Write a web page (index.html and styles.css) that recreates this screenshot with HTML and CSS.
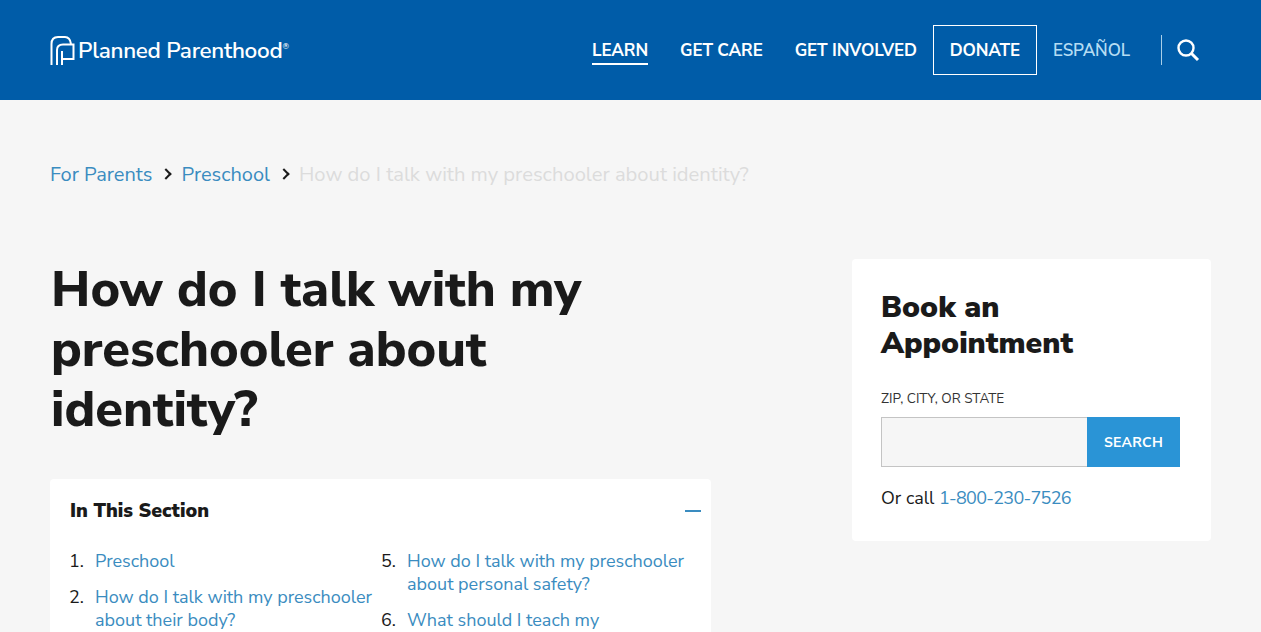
FILE: index.html
```html
<!DOCTYPE html>
<html lang="en">
<head>
    <meta charset="UTF-8">
    <meta name="viewport" content="width=device-width, initial-scale=1.0">
    <title>How do I talk with my preschooler about identity?</title>
    <link rel="stylesheet" href="styles.css">
</head>
<body>
    <header class="site-header">
        <a class="logo" href="#">
            <svg class="logo-mark" width="25" height="31" viewBox="4 4 25 31" fill="none" stroke="#fff" stroke-width="2">
                <path d="M5.500 34V13Q5.500 6 12 6H19Q24 6 25 13"/>
                <path d="M11 34V19Q11 13.500 17 13.500H27.500V28H16"/>
                <path d="M16 34V20"/>
            </svg>
            <span class="logo-text">Planned Parenthood<sup>®</sup></span>
        </a>
        <nav class="main-nav">
            <a class="nav-link active" href="#">LEARN</a>
            <a class="nav-link" href="#">GET CARE</a>
            <a class="nav-link" href="#">GET INVOLVED</a>
            <a class="nav-donate" href="#">DONATE</a>
            <a class="nav-link lang" href="#">ESPAÑOL</a>
            <span class="nav-divider"></span>
            <button class="nav-search" aria-label="Search">
                <svg width="24" height="24" viewBox="0 0 24 24" fill="none" stroke="#fff">
                    <circle cx="10" cy="10" r="7.500" stroke-width="2.400"/>
                    <path d="M15.500 15.500L22 22" stroke-width="3"/>
                </svg>
            </button>
        </nav>
    </header>

    <ol class="breadcrumb">
        <li><a href="#">For Parents</a></li>
        <li><a href="#">Preschool</a></li>
        <li class="current">How do I talk with my preschooler about identity?</li>
    </ol>

    <main class="content">
        <div class="article">
            <h1>How do I talk with my preschooler about identity?</h1>
            <section class="toc">
                <div class="toc-head">
                    <h2>In This Section</h2>
                    <span class="toc-toggle"></span>
                </div>
                <div class="toc-list">
                    <ol>
                        <li><a href="#">Preschool</a></li>
                        <li><a href="#">How do I talk with my preschooler about their body?</a></li>
                    </ol>
                    <ol class="second">
                        <li><a href="#">How do I talk with my preschooler about personal safety?</a></li>
                        <li><a href="#">What should I teach my</a></li>
                    </ol>
                </div>
            </section>
        </div>
        <aside class="book">
            <h2>Book an Appointment</h2>
            <label for="zip">ZIP, CITY, OR STATE</label>
            <div class="search-row">
                <input id="zip" type="text">
                <button>SEARCH</button>
            </div>
            <p>Or call <a href="#">1-800-230-7526</a></p>
        </aside>
    </main>
</body>
</html>
```

FILE: styles.css
```css
html, body {
    height: 632px;
    overflow: hidden;
}
body {
    margin: 0;
    background: #f6f6f6;
    color: #1a1a1a;
    font-family: 'Nunito Sans', 'Lato', sans-serif;
}
a {
    color: #3a8cc0;
    text-decoration: none;
}

.site-header {
    height: 100px;
    background: #005ca8;
    display: flex;
    align-items: center;
    justify-content: space-between;
    padding: 0 50px;
}
.logo {
    display: flex;
    align-items: center;
    gap: 3px;
    color: #fff;
}
.logo-text {
    font-size: 22.500px;
    font-weight: 600;
    letter-spacing: -0.3px;
}
.logo-text sup {
    font-size: 8px;
    vertical-align: 9px;
    line-height: 0;
}
.main-nav {
    display: flex;
    align-items: center;
    margin-right: 11px;
}
.nav-link {
    color: #fff;
    font-size: 17px;
    line-height: 20px;
    font-weight: 700;
    letter-spacing: -0.1px;
    margin-right: 32px;
    padding: 5px 0 2px;
    border-bottom: 2px solid transparent;
}
.nav-link.active {
    border-bottom-color: #fff;
}
.nav-donate {
    color: #fff;
    font-size: 17px;
    font-weight: 700;
    letter-spacing: -0.1px;
    border: 1px solid #fff;
    height: 50px;
    box-sizing: border-box;
    width: 104px;
    display: flex;
    align-items: center;
    justify-content: center;
    margin-left: -16px;
    margin-right: 16px;
}
.nav-link.lang {
    color: #b5dcf3;
    font-weight: 600;
    margin-right: 31px;
}
.nav-divider {
    width: 1px;
    height: 30px;
    background: #a9cfe8;
}
.nav-search {
    background: none;
    border: none;
    padding: 0;
    margin-left: 14px;
    display: flex;
}

.breadcrumb {
    list-style: none;
    margin: 0;
    padding: 63px 50px 0;
    display: flex;
    font-size: 20px;
    line-height: 24px;
}
.breadcrumb li + li::before {
    content: "";
    display: inline-block;
    width: 6px;
    height: 6px;
    border-top: 2px solid #1a1a1a;
    border-right: 2px solid #1a1a1a;
    transform: rotate(45deg);
    margin: 0 11px 3px 10px;
}
.breadcrumb .current {
    color: #dcdcdc;
    font-size: 20.200px;
}

.content {
    display: flex;
    justify-content: space-between;
    padding: 72px 50px 0;
}
.article {
    width: 661px;
}
h1 {
    margin: 1px 0 0 1px;
    font-size: 50.500px;
    line-height: 60px;
    font-weight: 800;
    width: 600px;
}
.toc {
    margin-top: 39px;
    background: #fff;
    border-radius: 4px;
    padding: 20px 10px 0 20px;
}
.toc-head {
    display: flex;
    align-items: center;
    justify-content: space-between;
}
.toc-head h2 {
    margin: 0;
    font-size: 19.500px;
    line-height: 24px;
    font-weight: 900;
}
.toc-toggle {
    width: 16px;
    height: 2px;
    background: #3a8cc0;
}
.toc-list {
    margin-top: 27px;
    margin-left: -1px;
    display: grid;
    grid-template-columns: 312px 1fr;
    font-size: 18px;
    line-height: 23px;
}
.toc-list ol {
    list-style: none;
    margin: 0;
    padding: 0;
    counter-reset: item;
}
.toc-list ol.second {
    counter-reset: item 4;
}
.toc-list li {
    counter-increment: item;
    display: flex;
    margin-bottom: 13px;
}
.toc-list li::before {
    content: counter(item) ".";
    flex: 0 0 26px;
}

.book {
    width: 359px;
    height: 282px;
    box-sizing: border-box;
    background: #fff;
    border-radius: 4px;
    padding: 31px 31px 0 29px;
}
.book h2 {
    margin: 0 0 28px;
    font-size: 30px;
    line-height: 36px;
    font-weight: 900;
    width: 220px;
}
.book label {
    display: block;
    font-size: 13.500px;
    line-height: 18px;
    color: #333;
    margin-bottom: 9px;
}
.search-row {
    display: flex;
    height: 50px;
}
.search-row input {
    flex: 1;
    min-width: 0;
    box-sizing: border-box;
    background: #f6f6f6;
    border: 1px solid #c4c4c4;
    border-right: 0;
}
.search-row button {
    width: 93px;
    background: #2a94d6;
    color: #fff;
    border: none;
    font-family: inherit;
    font-size: 14px;
    font-weight: 700;
    letter-spacing: 0.3px;
}
.book p {
    margin: 19px 0 0;
    font-size: 18px;
    line-height: 24px;
}
.book p a {
    letter-spacing: -0.7px;
}
```
